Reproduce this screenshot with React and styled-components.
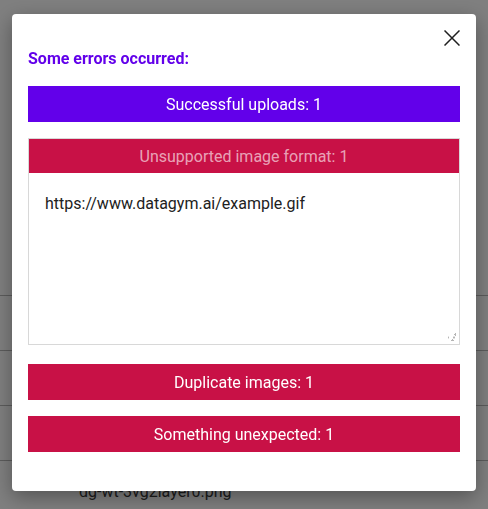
import styled, { createGlobalStyle } from 'styled-components';

const GlobalStyle = createGlobalStyle`
  html, body {
    margin: 0;
    padding: 0;
    background: #ffffff;
    font-family: Roboto, "Liberation Sans", sans-serif;
    overflow: hidden;
  }
  * {
    box-sizing: border-box;
  }
`;

const Page = styled.div`
  padding-top: 295px;
  height: 509px;
`;

const FileRow = styled.div`
  height: 55px;
  border-top: 1px solid #b8b8b8;
  display: flex;
  align-items: center;
  padding: 6px 0 0 79px;
  font-size: 16px;
  color: #3a3a3a;
`;

const Overlay = styled.div`
  position: fixed;
  inset: 0;
  background: rgba(0, 0, 0, 0.5);
`;

const Modal = styled.div`
  position: fixed;
  top: 14px;
  left: 12px;
  width: 464px;
  height: 477px;
  background: #ffffff;
  border-radius: 4px;
  box-shadow: 0 6px 20px rgba(0, 0, 0, 0.35);
  padding: 16px 16px 0;
  display: flex;
  flex-direction: column;
`;

const CloseRow = styled.div`
  display: flex;
  justify-content: flex-end;
  height: 17px;
`;

const CloseButton = styled.button`
  background: none;
  border: none;
  padding: 0;
  width: 16px;
  height: 16px;
  cursor: pointer;
  display: block;
`;

const Heading = styled.h2`
  margin: 0 0 15px;
  font-size: 16px;
  line-height: 24px;
  font-weight: 700;
  color: #6200ea;
`;

const Bar = styled.div`
  height: 36px;
  display: flex;
  align-items: center;
  justify-content: center;
  font-size: 16px;
  color: #ffffff;
  background: ${props => (props.$kind === 'success' ? '#6200ea' : '#c81146')};
  margin-bottom: ${props => props.$gap || 0}px;
`;

const Card = styled.div`
  position: relative;
  border: 1px solid #d8d8d8;
  margin-bottom: 19px;
  display: flex;
  flex-direction: column;
`;

const CardHeader = styled.div`
  height: 34px;
  background: #c81146;
  color: rgba(255, 255, 255, 0.62);
  font-size: 16px;
  display: flex;
  align-items: center;
  justify-content: center;
`;

const UrlList = styled.textarea`
  height: 171px;
  border: none;
  outline: none;
  resize: none;
  padding: 19px 16px 15px;
  font-family: Roboto, "Liberation Sans", sans-serif;
  font-size: 16px;
  line-height: 24px;
  color: #212121;
  background: #ffffff;
`;

const Grip = styled.span`
  position: absolute;
  right: 3px;
  bottom: 3px;
  width: 8px;
  height: 8px;
  background:
    radial-gradient(circle, #b5b5b5 1px, transparent 1.2px) 6px 0 / 3px 3px no-repeat,
    radial-gradient(circle, #b5b5b5 1px, transparent 1.2px) 3px 3px / 6px 3px repeat-x,
    radial-gradient(circle, #b5b5b5 1px, transparent 1.2px) 0 6px / 9px 3px repeat-x;
  pointer-events: none;
`;

const CloseIcon = () => (
  <svg width="16" height="16" viewBox="0 0 16 16">
    <path d="M0.5 0.5 L15.5 15.5 M15.5 0.5 L0.5 15.5" stroke="#1f1f1f" strokeWidth="1.5" fill="none" />
  </svg>
);

export default function App() {
  return (
    <>
      <GlobalStyle />
      <Page>
        <FileRow />
        <FileRow />
        <FileRow />
        <FileRow>dg-wt-3vg2layer0.png</FileRow>
      </Page>
      <Overlay />
      <Modal>
        <CloseRow>
          <CloseButton aria-label="Close">
            <CloseIcon />
          </CloseButton>
        </CloseRow>
        <Heading>Some errors occurred:</Heading>
        <Bar $kind="success" $gap={16}>Successful uploads: 1</Bar>
        <Card>
          <CardHeader>Unsupported image format: 1</CardHeader>
          <UrlList readOnly defaultValue="https://www.datagym.ai/example.gif" />
          <Grip />
        </Card>
        <Bar $kind="error" $gap={16}>Duplicate images: 1</Bar>
        <Bar $kind="error">Something unexpected: 1</Bar>
      </Modal>
    </>
  );
}
